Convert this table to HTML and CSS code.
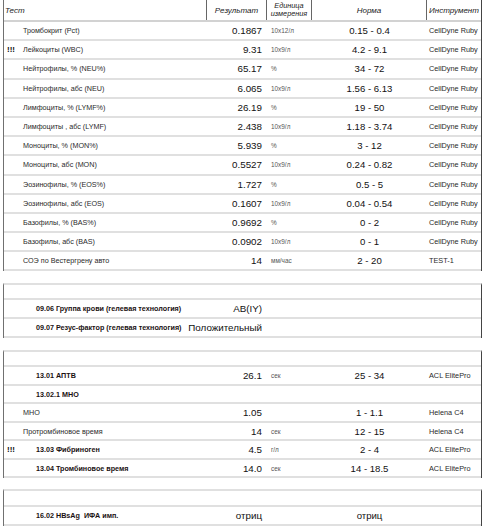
FILE: index.html
```html
<!DOCTYPE html>
<html lang="ru">
<head>
<meta charset="utf-8">
<link rel="stylesheet" href="styles.css">
</head>
<body>
<div class="page">
  <div class="sec sec-1">
    <div class="row head">
      <div class="h h-test">Тест</div>
      <div class="h h-c">Результат</div>
      <div class="h h-c h-unit">Единица<br>измерения</div>
      <div class="h h-c">Норма</div>
      <div class="h h-c h-last">Инструмент</div>
    </div>
    <div class="row r1"><div class="flag"></div><div class="name">Тромбокрит (Pct)</div><div class="res"><span>0.1867</span></div><div class="unit">10x12/л</div><div class="norm">0.15 - 0.4</div><div class="ins">CellDyne Ruby</div></div>
    <div class="row r1"><div class="flag">!!!</div><div class="name">Лейкоциты (WBC)</div><div class="res"><span>9.31</span></div><div class="unit">10x9/л</div><div class="norm">4.2 - 9.1</div><div class="ins">CellDyne Ruby</div></div>
    <div class="row r1"><div class="flag"></div><div class="name">Нейтрофилы, % (NEU%)</div><div class="res"><span>65.17</span></div><div class="unit">%</div><div class="norm">34 - 72</div><div class="ins">CellDyne Ruby</div></div>
    <div class="row r1"><div class="flag"></div><div class="name">Нейтрофилы, абс (NEU)</div><div class="res"><span>6.065</span></div><div class="unit">10x9/л</div><div class="norm">1.56 - 6.13</div><div class="ins">CellDyne Ruby</div></div>
    <div class="row r1"><div class="flag"></div><div class="name">Лимфоциты, % (LYMF%)</div><div class="res"><span>26.19</span></div><div class="unit">%</div><div class="norm">19 - 50</div><div class="ins">CellDyne Ruby</div></div>
    <div class="row r1"><div class="flag"></div><div class="name">Лимфоциты , абс (LYMF)</div><div class="res"><span>2.438</span></div><div class="unit">10x9/л</div><div class="norm">1.18 - 3.74</div><div class="ins">CellDyne Ruby</div></div>
    <div class="row r1"><div class="flag"></div><div class="name">Моноциты, % (MON%)</div><div class="res"><span>5.939</span></div><div class="unit">%</div><div class="norm">3 - 12</div><div class="ins">CellDyne Ruby</div></div>
    <div class="row r1"><div class="flag"></div><div class="name">Моноциты, абс (MON)</div><div class="res"><span>0.5527</span></div><div class="unit">10x9/л</div><div class="norm">0.24 - 0.82</div><div class="ins">CellDyne Ruby</div></div>
    <div class="row r1"><div class="flag"></div><div class="name">Эозинофилы, % (EOS%)</div><div class="res"><span>1.727</span></div><div class="unit">%</div><div class="norm">0.5 - 5</div><div class="ins">CellDyne Ruby</div></div>
    <div class="row r1"><div class="flag"></div><div class="name">Эозинофилы, абс (EOS)</div><div class="res"><span>0.1607</span></div><div class="unit">10x9/л</div><div class="norm">0.04 - 0.54</div><div class="ins">CellDyne Ruby</div></div>
    <div class="row r1"><div class="flag"></div><div class="name">Базофилы, % (BAS%)</div><div class="res"><span>0.9692</span></div><div class="unit">%</div><div class="norm">0 - 2</div><div class="ins">CellDyne Ruby</div></div>
    <div class="row r1"><div class="flag"></div><div class="name">Базофилы, абс (BAS)</div><div class="res"><span>0.0902</span></div><div class="unit">10x9/л</div><div class="norm">0 - 1</div><div class="ins">CellDyne Ruby</div></div>
    <div class="row r1"><div class="flag"></div><div class="name">СОЭ по Вестергрену авто</div><div class="res"><span>14</span></div><div class="unit">мм/час</div><div class="norm">2 - 20</div><div class="ins">TEST-1</div></div>
  </div>

  <div class="sec sec-2">
    <div class="row empty"></div>
    <div class="row r2"><div class="flag"></div><div class="name b">09.06 Группа крови (гелевая технология)</div><div class="res"><span>AB(IY)</span></div><div class="unit"></div><div class="norm"></div><div class="ins"></div></div>
    <div class="row r2"><div class="flag"></div><div class="name b">09.07 Резус-фактор (гелевая технология)</div><div class="res"><span>Положительный</span></div><div class="unit"></div><div class="norm"></div><div class="ins"></div></div>
  </div>

  <div class="sec sec-3">
    <div class="row empty"></div>
    <div class="row r3"><div class="flag"></div><div class="name b">13.01 АПТВ</div><div class="res"><span>26.1</span></div><div class="unit">сек</div><div class="norm">25 - 34</div><div class="ins">ACL ElitePro</div></div>
    <div class="row r3"><div class="flag"></div><div class="name b">13.02.1 МНО</div><div class="res"></div><div class="unit"></div><div class="norm"></div><div class="ins"></div></div>
    <div class="row r3"><div class="flag"></div><div class="name">МНО</div><div class="res"><span>1.05</span></div><div class="unit"></div><div class="norm">1 - 1.1</div><div class="ins">Helena C4</div></div>
    <div class="row r3"><div class="flag"></div><div class="name">Протромбиновое время</div><div class="res"><span>14</span></div><div class="unit">сек</div><div class="norm">12 - 15</div><div class="ins">Helena C4</div></div>
    <div class="row r3"><div class="flag">!!!</div><div class="name b">13.03 Фибриноген</div><div class="res"><span>4.5</span></div><div class="unit">г/л</div><div class="norm">2 - 4</div><div class="ins">ACL ElitePro</div></div>
    <div class="row r3"><div class="flag"></div><div class="name b">13.04 Тромбиновое время</div><div class="res"><span>14.0</span></div><div class="unit">сек</div><div class="norm">14 - 18.5</div><div class="ins">ACL ElitePro</div></div>
  </div>

  <div class="sec sec-4">
    <div class="row empty"></div>
    <div class="row r2"><div class="flag"></div><div class="name b">16.02 HBsAg&nbsp; ИФА имп.</div><div class="res"><span>отриц</span></div><div class="unit"></div><div class="norm">отриц</div><div class="ins"></div></div>
  </div>
</div>
</body>
</html>
```

FILE: styles.css
```css
html, body {
  margin: 0;
  padding: 0;
  background: #ffffff;
}

body {
  font-family: "Liberation Sans", Arial, sans-serif;
  color: #222;
}

.page {
  padding-left: 3px;
  width: 479px;
}

.sec {
  border-left: 1px solid #707070;
  border-right: 1px solid #444;
}

.sec-2 { margin-top: 12px; border-top: 2px solid #e0e0e0; }
.sec-3 { margin-top: 12px; border-top: 2px solid #e0e0e0; }
.sec-4 { margin-top: 11px; border-top: 2px solid #e0e0e0; }

.row {
  display: grid;
  grid-template-columns: 19px 184px 60px 45px 115px 54px;
  align-items: center;
  box-sizing: border-box;
  border-bottom: 2px solid #e0e0e0;
  white-space: nowrap;
}

.head {
  height: 22px;
  grid-template-columns: 203px 60px 45px 115px 54px;
  align-items: stretch;
  border-bottom: 2px solid #d2d2d2;
}

.h {
  font-size: 8px;
  font-style: italic;
  color: #222;
  display: flex;
  align-items: center;
  border-right: 1px solid #666;
}

.h-test { padding-left: 1px; }
.h-c { justify-content: center; text-align: center; }
.h-unit { font-size: 7.3px; line-height: 8.5px; }
.h-last { border-right: none; }

.r1 { height: 19.2px; }
.r2 { height: 19px; }
.r3 { height: 18.5px; }
.empty { height: 15px; }
.sec-4 .empty { height: 16px; }

.flag {
  font-size: 8px;
  font-weight: bold;
  color: #111;
  padding-left: 3px;
}

.name {
  font-size: 7.2px;
  color: #2a2a2a;
  overflow: visible;
}

.name.b {
  font-weight: bold;
  color: #1a1111;
  padding-left: 13px;
}

.res {
  display: flex;
  justify-content: flex-end;
  padding-right: 5px;
  font-size: 9.8px;
  color: #111;
}

.unit {
  font-size: 6.4px;
  color: #555;
  padding-left: 4px;
}

.norm {
  font-size: 9.6px;
  color: #111;
  text-align: center;
}

.ins {
  font-size: 7.3px;
  color: #2a2a2a;
  padding-left: 2px;
}
```
